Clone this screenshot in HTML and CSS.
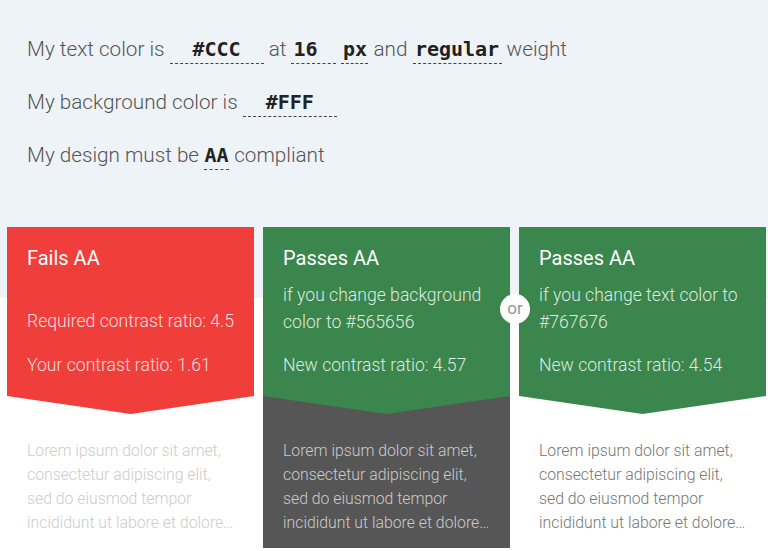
FILE: index.html
```html
<!DOCTYPE html>
<html lang="en">
<head>
<meta charset="utf-8">
<title>Contrast checker</title>
<link rel="stylesheet" href="styles.css">
</head>
<body>
<header class="settings">
  <p class="row">My text color is <span class="field w-color">#CCC</span> at <span class="field w-size">16</span> <span class="field w-unit">px</span> and <span class="field w-weight">regular</span> weight</p>
  <p class="row">My background color is <span class="field w-color">#FFF</span></p>
  <p class="row">My design must be <span class="field w-level">AA</span> compliant</p>
</header>
<main class="columns">
  <section class="col">
    <div class="card card-fail">
      <h2 class="card-title">Fails AA</h2>
      <p class="card-line first">Required contrast ratio: 4.5</p>
      <p class="card-line ratio">Your contrast ratio: 1.61</p>
    </div>
    <p class="sample sample-orig">Lorem ipsum dolor sit amet,<br>consectetur adipiscing elit,<br>sed do eiusmod tempor<br>incididunt ut labore et dolore…</p>
  </section>
  <section class="col col-dark">
    <div class="card card-pass">
      <h2 class="card-title">Passes AA</h2>
      <p class="card-line sub">if you change background color to #565656</p>
      <p class="card-line ratio">New contrast ratio: 4.57</p>
    </div>
    <p class="sample sample-bg">Lorem ipsum dolor sit amet,<br>consectetur adipiscing elit,<br>sed do eiusmod tempor<br>incididunt ut labore et dolore…</p>
  </section>
  <section class="col">
    <div class="card card-pass">
      <h2 class="card-title">Passes AA</h2>
      <p class="card-line sub">if you change text color to #767676</p>
      <p class="card-line ratio">New contrast ratio: 4.54</p>
    </div>
    <p class="sample sample-text">Lorem ipsum dolor sit amet,<br>consectetur adipiscing elit,<br>sed do eiusmod tempor<br>incididunt ut labore et dolore…</p>
  </section>
  <span class="or-badge">or</span>
</main>
</body>
</html>
```

FILE: styles.css
```css
* { box-sizing: border-box; }

html, body {
  margin: 0;
  padding: 0;
  background: #ffffff;
}

body {
  font-family: Roboto, "Noto Sans", sans-serif;
  width: 768px;
  height: 551px;
  overflow: hidden;
}

.settings {
  background: #eef3f8;
  height: 298px;
  padding: 23px 0 0 27px;
}

.row {
  margin: 0;
  font-size: 20.7px;
  font-weight: 300;
  line-height: 53px;
  color: #555555;
  white-space: nowrap;
}

.field {
  display: inline-block;
  font-family: "DejaVu Sans Mono", "Liberation Mono", monospace;
  font-weight: 700;
  font-size: 20px;
  line-height: 24px;
  padding-bottom: 2px;
  color: #222222;
  text-align: center;
  border-bottom: 1px dashed #444444;
  vertical-align: baseline;
}

.w-color { width: 94px; }
.w-size { width: 45px; text-align: left; padding-left: 2px; }
.w-unit { width: 27px; }
.w-weight { width: 89px; }
.w-level { width: 25px; }

.columns {
  position: relative;
  margin-top: -71px;
  padding-left: 7px;
  display: grid;
  grid-template-columns: repeat(3, 247px);
  column-gap: 9px;
  align-items: start;
}

.col {
  display: flex;
  flex-direction: column;
}

.col-dark {
  background: #565656;
}

.card {
  height: 187px;
  padding: 19px 16px 0 20px;
  color: #ffffff;
  clip-path: polygon(0 0, 100% 0, 100% 169px, 50% 100%, 0 169px);
}

.card-fail { background: #f03e3b; }
.card-pass { background: #3b864c; }

.card-title {
  margin: 0;
  font-size: 20px;
  font-weight: 400;
  line-height: 24px;
}

.card-line {
  margin: 0;
  font-size: 17.6px;
  font-weight: 300;
  line-height: 27px;
  color: rgba(255, 255, 255, 0.85);
}

.card-line.first { margin-top: 38px; }
.card-line.sub { margin-top: 12px; }
.card-line.ratio { margin-top: 17px; }
.card-line.sub + .card-line.ratio { margin-top: 16px; }

.sample {
  margin: 0;
  padding: 25px 8px 13px 20px;
  font-size: 15.8px;
  font-weight: 300;
  line-height: 24px;
  white-space: nowrap;
}

.sample-orig { color: #cccccc; }
.sample-bg { color: #cccccc; }
.sample-text { color: #767676; }

.or-badge {
  position: absolute;
  left: 500px;
  top: 67px;
  width: 30px;
  height: 30px;
  border-radius: 50%;
  background: #ffffff;
  color: #8a9a9a;
  font-size: 17px;
  font-weight: 400;
  line-height: 28px;
  text-align: center;
}
```
